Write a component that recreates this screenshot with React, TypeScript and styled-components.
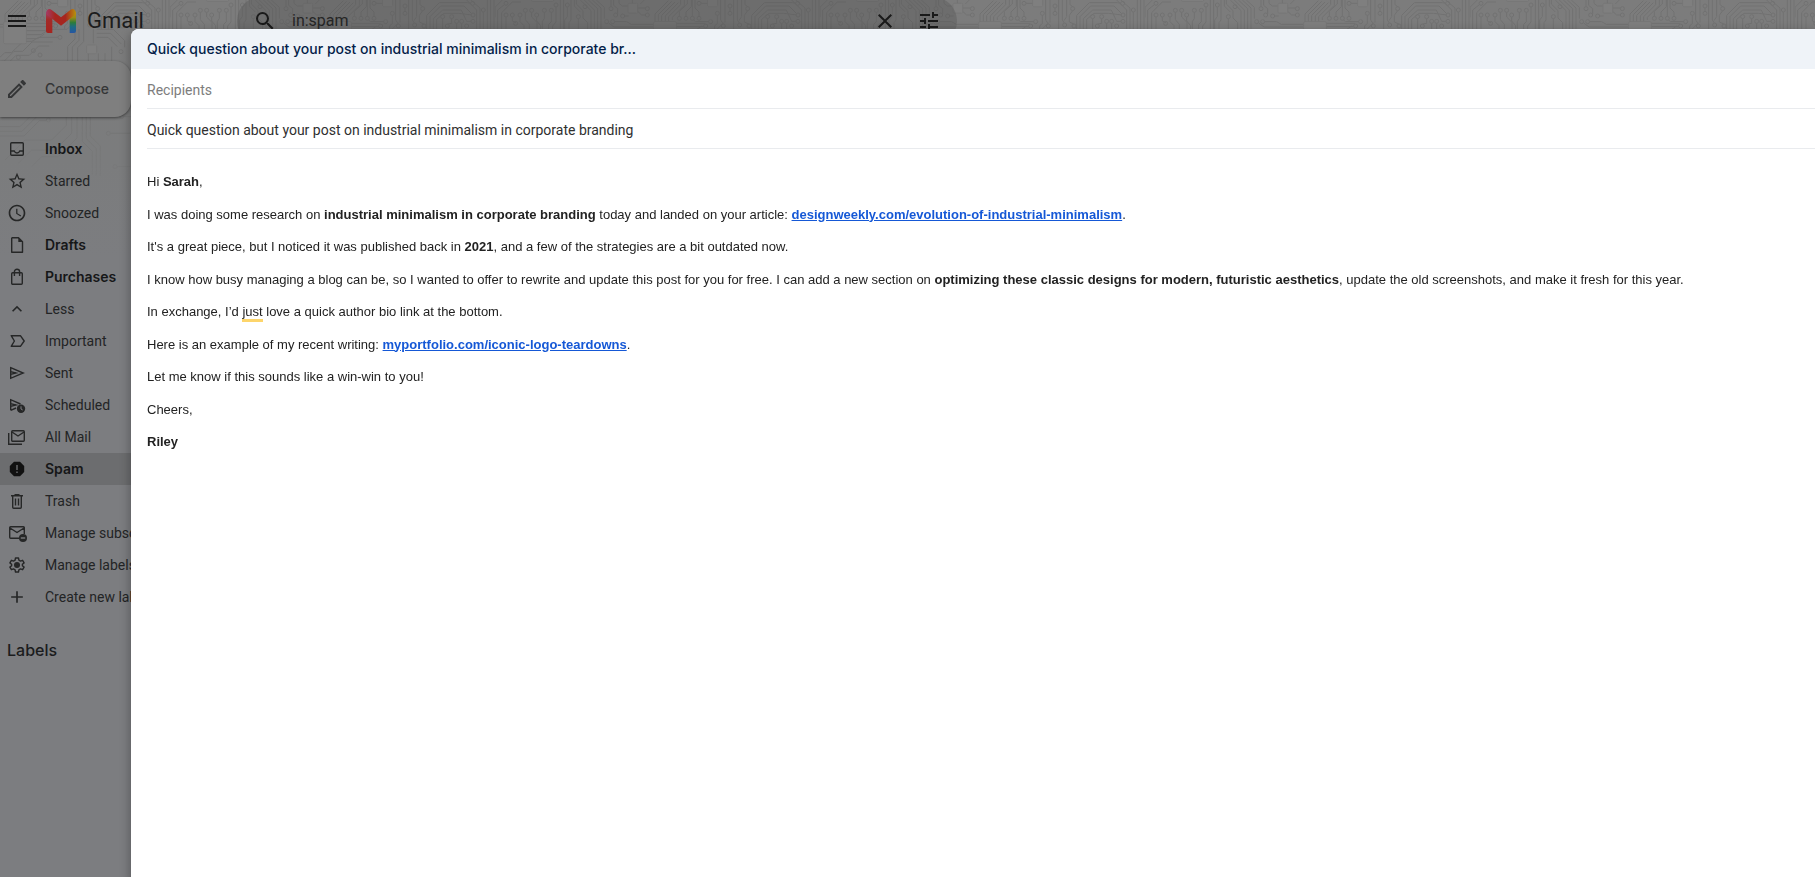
import React from "react";
import styled, { createGlobalStyle } from "styled-components";
import {
  MdMenu,
  MdSearch,
  MdClose,
  MdTune,
  MdOutlineEdit,
  MdStarBorder,
  MdAccessTime,
  MdExpandLess,
  MdAdd,
} from "react-icons/md";

const uiFont = `Roboto, Inter, sans-serif`;
const strongFont = `Inter, Roboto, sans-serif`;
const bodyFont = `"Liberation Sans", Arial, sans-serif`;

const GlobalStyle = createGlobalStyle`
  * { box-sizing: border-box; }
  html, body { margin: 0; height: 100%; overflow: hidden; background: #7c7d80; }
  body { font-family: ${uiFont}; font-size: 14px; color: #1b1c1d; }
  #root { height: 100%; }
`;

const Page = styled.div`
  position: relative;
  min-height: 100vh;
  overflow: hidden;
  background: linear-gradient(#7c7c7c 0, #7b7c7d 160px, #7c7d80 260px);
`;

/* The theme's circuit-board texture, behind everything at the top. */
const Texture = styled.svg`
  position: absolute;
  inset: 0;
  width: 100%;
  height: 210px;
  mask-image: linear-gradient(#000 60px, transparent 205px);
`;

const Header = styled.header`
  position: relative;
  display: flex;
  align-items: center;
  height: 42px;
`;

const HeaderStart = styled.div`
  display: flex;
  align-items: center;
  flex: none;
  padding-left: 5px;
`;

const IconButton = styled.button`
  display: flex;
  align-items: center;
  justify-content: center;
  flex: none;
  width: 24px;
  height: 24px;
  padding: 0;
  border: 0;
  background: none;
  color: #1a1a1a;
  font-size: 24px;
`;

const Brand = styled.a`
  display: flex;
  align-items: center;
  gap: 11px;
  width: 191px;
  margin-left: 17px;
  color: #1c1c1c;
  font-size: 22px;
  line-height: 24px;
  text-decoration: none;
`;

const SearchBar = styled.form`
  display: flex;
  align-items: center;
  flex: none;
  width: 720px;
  max-width: 60%;
  height: 48px;
  padding: 0 16px;
  border-radius: 24px;
  background: rgba(72, 72, 72, 0.28);
`;

const SearchInput = styled.input`
  flex: 1;
  min-width: 0;
  margin: 0 16px 0 15px;
  padding: 0;
  border: 0;
  outline: 0;
  background: none;
  color: #262626;
  font: 16px/24px ${uiFont};
`;

const SearchActions = styled.div`
  display: flex;
  gap: 20px;
`;

const Sidebar = styled.aside`
  position: relative;
  width: 256px;
  padding-top: 19px;
`;

const Compose = styled.button`
  display: flex;
  align-items: center;
  gap: 16px;
  width: 131px;
  height: 56px;
  padding: 0 0 0 5px;
  border: 0;
  border-radius: 0 16px 16px 0;
  background: #7f7f7f;
  box-shadow: 0 1px 3px rgba(0, 0, 0, 0.5);
  color: #353637;
  font: 500 14px/20px ${strongFont};
`;

const NavList = styled.ul`
  margin: 16px 0 0;
  padding: 0;
  list-style: none;
`;

const NavLink = styled.a<{ $strong?: boolean; $active?: boolean }>`
  display: flex;
  align-items: center;
  gap: 18px;
  height: 32px;
  padding-left: 7px;
  background: ${(p) => (p.$active ? "#6c6d6f" : "transparent")};
  color: ${(p) => (p.$strong ? "#161718" : "#232425")};
  font-family: ${(p) => (p.$strong ? strongFont : uiFont)};
  font-weight: ${(p) => (p.$strong ? 600 : 400)};
  line-height: 20px;
  text-decoration: none;
  white-space: nowrap;

  svg {
    flex: none;
    width: 20px;
    height: 20px;
    color: ${(p) => (p.$active ? "#111" : "#262727")};
  }
`;

const LabelsTitle = styled.h2`
  margin: 25px 0 0 7px;
  color: #1b1c1d;
  font: 500 16px/24px ${strongFont};
`;

/* The compose window floats over the mailbox. */
const Dialog = styled.section`
  position: fixed;
  inset: 29px 0 0 131px;
  display: flex;
  flex-direction: column;
  overflow: hidden;
  border-radius: 8px 0 0 0;
  background: #fff;
`;

const DialogShade = styled.div`
  position: fixed;
  inset: 29px 0 0 131px;
  border-radius: 8px 0 0 0;
  box-shadow: 0 4px 10px 2px rgba(0, 0, 0, 0.25);
`;

const DialogTitle = styled.h1`
  flex: none;
  margin: 0;
  padding: 0 16px;
  background: #eff3f8;
  color: #041e49;
  font: 500 14px/40px ${strongFont};
`;

const Fields = styled.div`
  display: flex;
  flex-direction: column;
  padding-left: 16px;
`;

const Field = styled.input`
  height: 40px;
  padding: 2px 0 0;
  border: 0;
  border-bottom: 1px solid #e9ebee;
  outline: 0;
  background: none;
  color: #303030;
  font: 14px/20px ${uiFont};

  &::placeholder {
    color: #7d7d7d;
    opacity: 1;
  }
`;

const Message = styled.div`
  flex: 1;
  padding: 10px 16px;
  outline: 0;
  color: #222;
  font-family: ${bodyFont};
  font-size: 13px;
  line-height: 1.5;

  p {
    margin: 1em 0;
  }

  a {
    color: #1558d6;
    font-weight: 700;
  }
`;

const Suggestion = styled.span`
  border-bottom: 3px solid #fdd56b;
`;

const Stroke = ({ children }: { children: React.ReactNode }) => (
  <svg
    viewBox="0 0 20 20"
    fill="none"
    stroke="currentColor"
    strokeWidth="1.4"
    aria-hidden="true"
  >
    {children}
  </svg>
);

const InboxIcon = () => (
  <Stroke>
    <rect x="3.7" y="3.7" width="12.6" height="12.6" rx="1" />
    <path d="M3.7 12h3.5c.6 1.300 1.600 2 2.800 2s2.200-.7 2.800-2h3.500" />
  </Stroke>
);

const DraftsIcon = () => (
  <Stroke>
    <path d="M5.200 2.700h6.300l4 4v10.600H4.700V3.200z" strokeLinejoin="round" />
    <path d="M11.300 2.500v4.500h4.500z" fill="currentColor" stroke="none" />
  </Stroke>
);

const BagIcon = () => (
  <Stroke>
    <rect x="4.700" y="5.700" width="10.600" height="11.600" rx="1" />
    <path d="M7.400 9V4.800a2.600 2.600 0 0 1 5.200 0V9" />
  </Stroke>
);

const ImportantIcon = () => (
  <Stroke>
    <path
      d="M4.200 4.700h9.200l3.800 5.300-3.800 5.300H4.200L7.400 10z"
      strokeLinejoin="round"
    />
  </Stroke>
);

const SentIcon = () => (
  <Stroke>
    <path d="M3.700 4.700 16.200 10 3.700 15.300V4.700zM3.700 8.600 9 10l-5.300 1.400" />
  </Stroke>
);

const ScheduledIcon = () => (
  <Stroke>
    <path d="M3.700 15.300V4.700L13.500 9M3.700 8.600 9 10l-5.300 1.400M3.700 15.300 9 13" />
    <circle cx="14" cy="13.800" r="4.200" fill="currentColor" stroke="none" />
    <path d="M14 11.300v2.700l1.700 1" stroke="#7c7d80" strokeWidth="1" />
  </Stroke>
);

const AllMailIcon = () => (
  <Stroke>
    <rect x="4.700" y="3.700" width="12.600" height="10.600" rx="1" />
    <path d="m5 5 6 4 6-4M1.700 6v11.300h13.300" />
  </Stroke>
);

const SpamIcon = () => (
  <Stroke>
    <path
      d="M7 2.800h6L17.200 7v6L13 17.200H7L2.800 13V7z"
      fill="currentColor"
      stroke="none"
    />
    <path d="M10 6v5M10 12.500v1.500" stroke="#6c6d6f" />
  </Stroke>
);

const TrashIcon = () => (
  <Stroke>
    <path d="M5.700 5v11.300q0 1 1 1h6.600q1 0 1-1V5M4 4.700h12M7.500 3.700h5M8.500 7.500v7M11.500 7.500v7" />
  </Stroke>
);

const SubscriptionsIcon = () => (
  <Stroke>
    <path d="M17.300 11V4.700q0-1-1-1H3.700q-1 0-1 1v9.600q0 1 1 1H12M3 5l7 4.500L17 5" />
    <circle cx="16" cy="15" r="4" fill="currentColor" stroke="none" />
    <path d="M13.800 15h4.400" stroke="#7c7d80" />
  </Stroke>
);

const GearIcon = () => (
  <Stroke>
    <path
      d="M8.500 3h3l.4 2.200 1.600.9 2.100-.8 1.500 2.600-1.700 1.400v1.400l1.700 1.400-1.500 2.600-2.100-.8-1.600.9-.4 2.200h-3l-.4-2.200-1.600-.9-2.100.8-1.500-2.600 1.700-1.400V9.300L2.900 7.900l1.500-2.600 2.100.8 1.600-.9z"
      strokeLinejoin="round"
    />
    <circle cx="10" cy="10" r="3" fill="currentColor" stroke="none" />
  </Stroke>
);

const GmailMark = () => (
  <svg width="30" height="24" viewBox="0 0 90 72" aria-hidden="true">
    <defs>
      <linearGradient id="mark-left" x1="0" y1="0" x2="0" y2="1">
        <stop offset="0" stopColor="#a33c66" />
        <stop offset="0.350" stopColor="#a32b28" />
        <stop offset="1" stopColor="#a6241f" />
      </linearGradient>
      <linearGradient id="mark-right" x1="0" y1="0" x2="0" y2="1">
        <stop offset="0" stopColor="#b98f0c" />
        <stop offset="0.250" stopColor="#9c8a14" />
        <stop offset="0.500" stopColor="#2c7c3a" />
        <stop offset="0.700" stopColor="#1c6c83" />
        <stop offset="1" stopColor="#2555a3" />
      </linearGradient>
      <linearGradient id="mark-fold" x1="0" y1="0" x2="1" y2="0">
        <stop offset="0" stopColor="#a33c66" />
        <stop offset="0.300" stopColor="#a6261f" />
        <stop offset="0.650" stopColor="#a6261f" />
        <stop offset="1" stopColor="#b98f0c" />
      </linearGradient>
    </defs>
    <path d="M0 10h19v62H6q-6 0-6-6z" fill="url(#mark-left)" />
    <path d="M71 10h19v56q0 6-6 6H71z" fill="url(#mark-right)" />
    <path
      d="M3 4Q9-3 17 3l28 22L73 3q8-6 14 1 6 8-2 15L45 50 5 19Q-3 12 3 4z"
      fill="url(#mark-fold)"
    />
  </svg>
);

const nodes: [number, number][] = [
  [33, 10], [33, 45], [52, 45], [75, 45], [91, 31], [110, 31], [125, 45],
  [148, 31], [169, 31], [183, 15], [217, 15], [270, 20], [250, 50], [62, 70],
  [335, 65], [353, 65], [348, 26], [362, 45], [383, 48], [457, 26], [457, 45],
  [553, 55], [573, 55], [592, 55], [612, 55], [612, 10], [632, 78], [647, 65],
  [667, 40], [705, 18], [705, 40], [685, 78], [734, 75], [762, 78], [758, 26],
  [818, 50], [845, 50], [832, 78], [860, 64], [875, 64], [890, 78], [909, 45],
  [909, 64], [908, 10], [940, 30], [645, 112], [585, 165], [565, 152],
  [828, 155], [700, 190], [520, 172], [760, 340], [790, 400], [830, 350],
  [610, 360], [560, 330], [810, 500],
];

const wires = [
  "M0 52V22L22 0M8 87V30L28 14M20 87V38L52 6H78M33 51V87M52 51v12l12 6M75 51v14l12 12V87M91 37v22l12 14V87M110 37v14l16 16V87M125 51v12l12 14V87M148 37v18l-6 10V87M169 37v28l-8 8V87M183 21v45l-10 12V87",
  "M196 0V87M206 0V87M217 21V50l-8 10V87M228 0v60l-6 8V87M238 0 V18L256 36M244 0v12l20 20v22l14 14v19M256 0l32 32V87M268 0l30 30V87M280 0l28 26V87M292 0l26 24V87M304 0l24 22v34M250 56v31",
  "M348 20V0M356 0v16l12 10v16M372 0v10l10 8h16M389 48h12M428 24h23M428 34l12 11h11M436 12 448 0M412 10V0",
  "M359 65h36l14 8h66M341 69l16 12h118M480 70V42L520 2M490 64V44L530 4M500 64V46L540 6M511 64V48L550 8M521 64V50l36-36V0M532 60V52l36-36V0M553 49V34l24-22V0M573 49V36l16-16V0M592 49V0M612 49V36L600 24V0M618 10h20",
  "M544 70h86M544 80h82M641 65h-40l-6-6M667 46v24l-8 8V87M677 0v60l8 12M690 0v68M705 24v10M716 0v87M727 0v60l6 9M740 0v50l-8 12M750 0v14l8 6M758 32l-10 14v20l14 6",
  "M770 87V46l38-38h84l10 2M780 87V50l32-32h70l22 22M790 87V56l28-26h56l16 34h13M800 87V58l22-18h44l40 5M818 56V87M845 56V70l-12 2M860 70v17M875 70v17M930 87V24L902 0M920 87V30L890 0M940 36V87M952 0v87M962 0v87M972 0V87",
  "M465 196h18l30-30h40l28-28h32M465 184h12l30-30h26l28-28h62M465 172l14-14h20l36-34h26l20-12h58M544 92h56l20-14M544 104h44l24-16h54l20-20M544 116h34l20-14",
  "M690 87v30l-22 22v60M702 87v34l-20 20v60M716 87v38l-18 18v40M755 100h42l32 32M755 88h50l34 34v20M755 112h34l28 28M745 87V130M730 160v26l-14 14M760 160v30M780 160v30M800 140v50",
  "M465 380h60l40-40M465 394h66l44-44h30M465 408h72l46-46h20M480 480l60-60h80l44-44v-60M520 490l40-40h70l50-50v-90M560 500l30-30h50l56-56v-110M712 304v120l30 30v70M724 304v112l30 30v80M736 304v104l30 30v90M766 340h50l30-30M796 400h60M836 350h24M816 500h40",
];

const CircuitTexture = () => (
  <Texture aria-hidden="true">
    <defs>
      <pattern
        id="circuit"
        width="325"
        height="210"
        x="170"
        patternUnits="userSpaceOnUse"
        viewBox="0 0 975 630"
      >
        <g fill="none" stroke="#717171" strokeWidth="3">
          {wires.map((d) => (
            <path key={d} d={d} />
          ))}
          {nodes.map(([x, y]) => (
            <circle key={`${x}-${y}`} cx={x} cy={y} r="6" />
          ))}
        </g>
        <g fill="#7f7f7f" stroke="#727272" strokeWidth="2">
          <rect x="399" y="10" width="29" height="29" rx="3" />
          <rect x="638" y="-10" width="30" height="30" rx="3" />
          <rect x="110" y="-10" width="66" height="14" rx="3" />
          <rect x="476" y="65" width="68" height="66" rx="4" />
          <rect x="725" y="135" width="30" height="26" rx="3" />
        </g>
      </pattern>
    </defs>
    <rect width="100%" height="100%" fill="url(#circuit)" />
  </Texture>
);

type NavItem = {
  label: string;
  icon: React.ComponentType;
  strong?: boolean;
  active?: boolean;
};

const navItems: NavItem[] = [
  { label: "Inbox", icon: InboxIcon, strong: true },
  { label: "Starred", icon: MdStarBorder },
  { label: "Snoozed", icon: MdAccessTime },
  { label: "Drafts", icon: DraftsIcon, strong: true },
  { label: "Purchases", icon: BagIcon, strong: true },
  { label: "Less", icon: MdExpandLess },
  { label: "Important", icon: ImportantIcon },
  { label: "Sent", icon: SentIcon },
  { label: "Scheduled", icon: ScheduledIcon },
  { label: "All Mail", icon: AllMailIcon },
  { label: "Spam", icon: SpamIcon, strong: true, active: true },
  { label: "Trash", icon: TrashIcon },
  { label: "Manage subscriptions", icon: SubscriptionsIcon },
  { label: "Manage labels", icon: GearIcon },
  { label: "Create new label", icon: MdAdd },
];

export default function App() {
  return (
    <>
      <GlobalStyle />
      <Page>
        <CircuitTexture />
        <Header>
          <HeaderStart>
            <IconButton type="button" aria-label="Main menu">
              <MdMenu />
            </IconButton>
            <Brand href="#inbox">
              <GmailMark />
              Gmail
            </Brand>
          </HeaderStart>
          <SearchBar role="search">
            <IconButton type="button" aria-label="Search">
              <MdSearch />
            </IconButton>
            <SearchInput aria-label="Search mail" defaultValue="in:spam" />
            <SearchActions>
              <IconButton type="button" aria-label="Clear search">
                <MdClose />
              </IconButton>
              <IconButton type="button" aria-label="Search options">
                <MdTune />
              </IconButton>
            </SearchActions>
          </SearchBar>
        </Header>
        <Sidebar>
          <Compose type="button">
            <MdOutlineEdit size={24} />
            Compose
          </Compose>
          <nav aria-label="Mailboxes">
            <NavList>
              {navItems.map(({ label, icon: Icon, strong, active }) => (
                <li key={label}>
                  <NavLink href="#" $strong={strong} $active={active}>
                    <Icon />
                    {label}
                  </NavLink>
                </li>
              ))}
            </NavList>
          </nav>
          <LabelsTitle>Labels</LabelsTitle>
        </Sidebar>
      </Page>
      <DialogShade />
      <Dialog role="dialog" aria-labelledby="compose-title">
        <DialogTitle id="compose-title">
          Quick question about your post on industrial minimalism in corporate
          br...
        </DialogTitle>
        <Fields>
          <Field aria-label="Recipients" placeholder="Recipients" />
          <Field
            aria-label="Subject"
            defaultValue="Quick question about your post on industrial minimalism in corporate branding"
          />
        </Fields>
        <Message
          role="textbox"
          aria-label="Message body"
          aria-multiline="true"
          contentEditable
          suppressContentEditableWarning
          spellCheck={false}
        >
          <p>
            Hi <b>Sarah</b>,
          </p>
          <p>
            I was doing some research on{" "}
            <b>industrial minimalism in corporate branding</b> today and landed
            on your article:{" "}
            <a href="#article">
              designweekly.com/evolution-of-industrial-minimalism
            </a>
            .
          </p>
          <p>
            It's a great piece, but I noticed it was published back in{" "}
            <b>2021</b>, and a few of the strategies are a bit outdated now.
          </p>
          <p>
            I know how busy managing a blog can be, so I wanted to offer to
            rewrite and update this post for you for free. I can add a new
            section on{" "}
            <b>
              optimizing these classic designs for modern, futuristic aesthetics
            </b>
            , update the old screenshots, and make it fresh for this year.
          </p>
          <p>
            In exchange, I’d <Suggestion>just</Suggestion> love a quick author
            bio link at the bottom.
          </p>
          <p>
            Here is an example of my recent writing:{" "}
            <a href="#portfolio">myportfolio.com/iconic-logo-teardowns</a>.
          </p>
          <p>Let me know if this sounds like a win-win to you!</p>
          <p>Cheers,</p>
          <p>
            <b>Riley</b>
          </p>
        </Message>
      </Dialog>
    </>
  );
}
